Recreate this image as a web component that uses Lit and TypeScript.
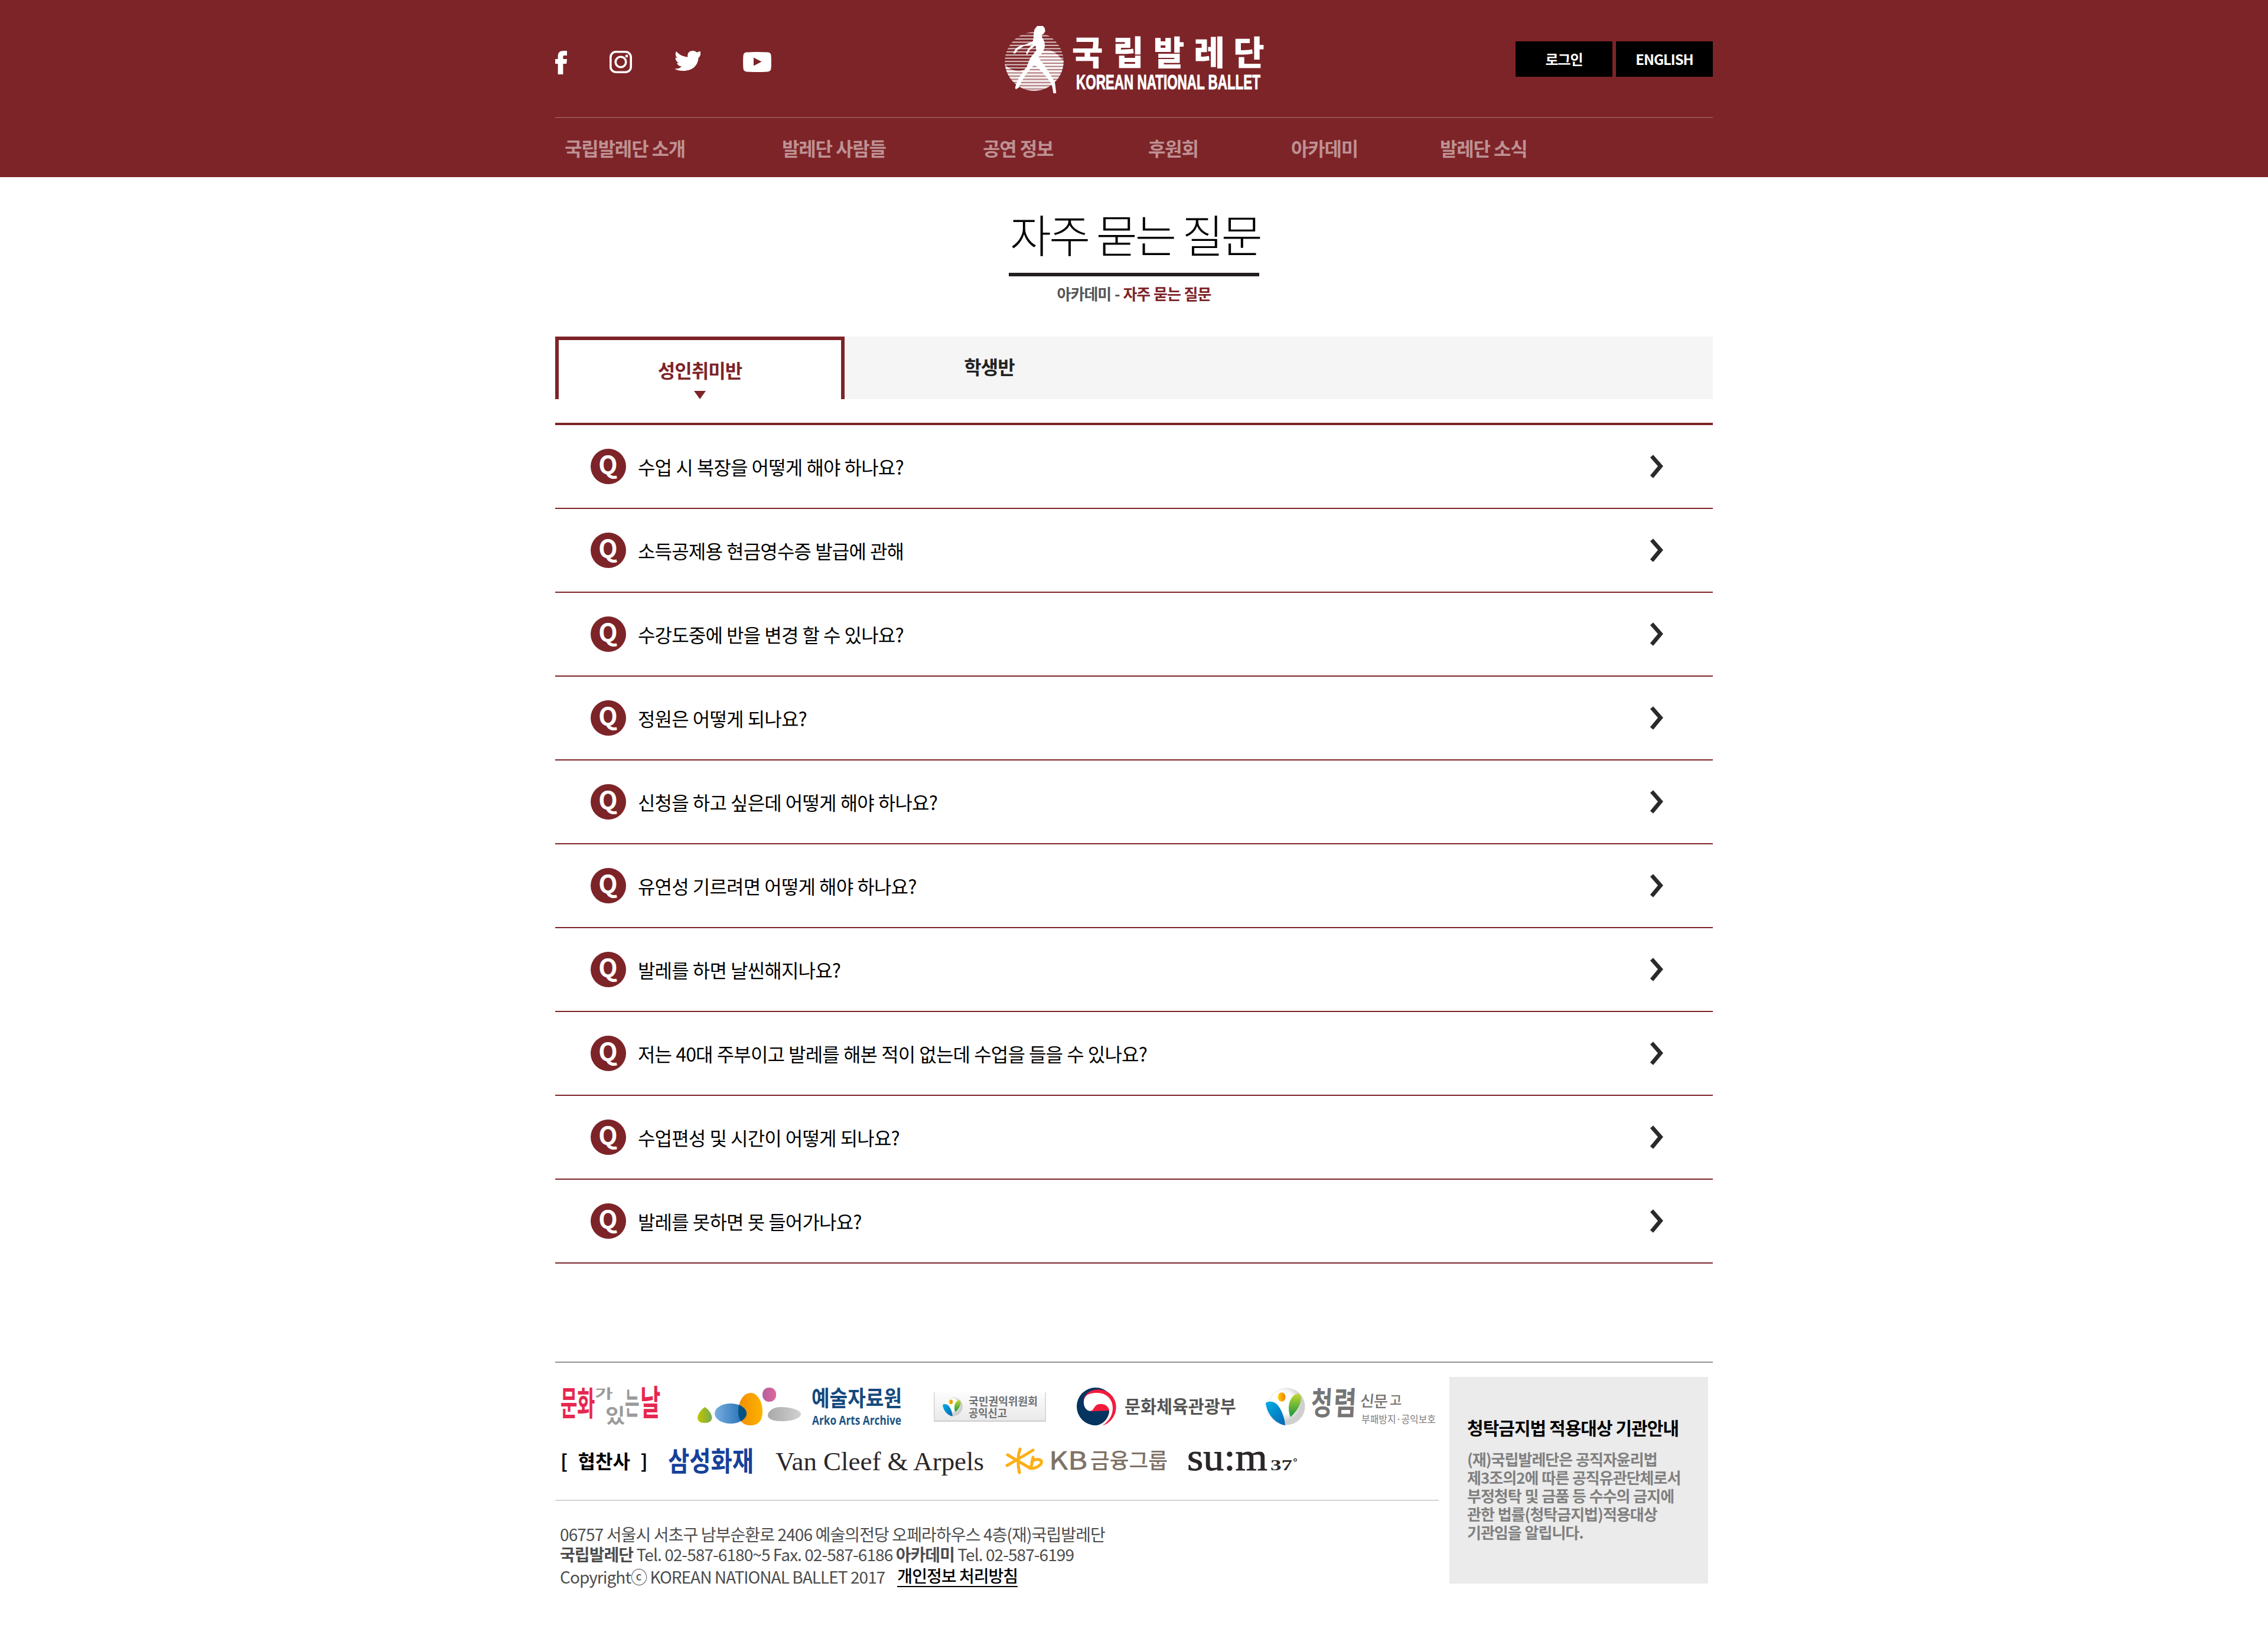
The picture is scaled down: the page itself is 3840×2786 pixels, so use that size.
import { LitElement, html, css, svg } from "lit";
import { customElement, property } from "lit/decorators.js";

const NAV = ["국립발레단 소개", "발레단 사람들", "공연 정보", "후원회", "아카데미", "발레단 소식"];

const QUESTIONS = [
  "수업 시 복장을 어떻게 해야 하나요?",
  "소득공제용 현금영수증 발급에 관해",
  "수강도중에 반을 변경 할 수 있나요?",
  "정원은 어떻게 되나요?",
  "신청을 하고 싶은데 어떻게 해야 하나요?",
  "유연성 기르려면 어떻게 해야 하나요?",
  "발레를 하면 날씬해지나요?",
  "저는 40대 주부이고 발레를 해본 적이 없는데 수업을 들을 수 있나요?",
  "수업편성 및 시간이 어떻게 되나요?",
  "발레를 못하면 못 들어가나요?",
];

const base = css`
  :host { box-sizing: border-box; }
  * { box-sizing: border-box; }
  h1, h3, p { margin: 0; }
  svg { display: block; flex: none; overflow: visible; }
  svg text { font-family: "Noto Sans CJK KR", sans-serif; letter-spacing: 0; word-spacing: 0; }
`;

@customElement("social-links")
class SocialLinks extends LitElement {
  static styles = [base, css`
    :host { display: flex; align-items: flex-start; }
    .fb { margin-right: 72px; }
    .ig { margin-right: 72px; }
    .tw { margin-right: 72px; }
    .yt { margin-top: 2px; }
  `];
  render() {
    return html`
      <svg class="fb" width="20" height="40" viewBox="0 0 20 40" fill="#fff">
        <path d="M4.600 40V22H0v-8h4.600V9.500C4.600 3 8 0 14 0h6v8h-4.500C13.600 8 13.400 9 13.400 10.500V14H20l-.8 8h-5.800v18z"/>
      </svg>
      <svg class="ig" width="38" height="38" viewBox="0 0 38 38" fill="none" stroke="#fff" stroke-width="3.600">
        <rect x="1.800" y="1.800" width="34.400" height="34.400" rx="9"/>
        <circle cx="19" cy="19" r="8.800"/>
        <circle cx="29" cy="9" r="2.400" fill="#fff" stroke="none"/>
      </svg>
      <svg class="tw" width="44" height="34" viewBox="0 0 44 34" fill="#fff">
        <path d="M44 2v5q-1 3-3.500 5C40 25 30 34 15 34 9 34 4 33 0 30.500c4.500.3 9-.8 12-3.800-4-.4-7-2.700-8-6.200h3.700C3.700 19 1.500 15.500 1.500 11.500l3.600 1C1.500 9.500.8 4.800 3 1c5 5.500 11 9 19.500 9.500C21 4 25.500 0 31 0c3 0 5 1 6.800 2.800L43.500.8 44 2z"/>
      </svg>
      <svg class="yt" width="48" height="34" viewBox="0 0 48 34">
        <path d="M6 .6Q24-.6 42 .6 47.400 1 47.600 7q.6 10 0 20-.2 6-5.600 6.400-18 1.200-36 0Q.6 33 .4 27q-.6-10 0-20Q.6 1 6 .6z" fill="#fff"/>
        <path d="M18 9.500L31.500 16.500 18 23.500z" fill="#7d2428"/>
      </svg>`;
  }
}

@customElement("ballet-logo")
class BalletLogo extends LitElement {
  static styles = [base, css`
    :host { display: block; }
    .ko { font-size: 172px; font-weight: 900; }
    svg .en { font-family: "Liberation Sans", Arial, sans-serif; font-size: 104px; font-weight: 700; }
  `];
  render() {
    const thin = Array.from({ length: 13 }, (_, i) => 106 + i * 16.3);
    const thick = Array.from({ length: 13 }, (_, i) => 204 + i * 16.3);
    return html`
      <svg width="437" height="111" viewBox="126 72 1311 333" fill="#fff">
        <defs>
          <clipPath id="disc"><circle cx="273" cy="252" r="149"/></clipPath>
          <clipPath id="low"><path d="M120 262Q150 300 196 302 240 296 262 240 300 192 345 194 385 200 410 240L440 250V420H120z"/></clipPath>
        </defs>
        <g clip-path="url(#disc)" opacity=".66">
          ${thin.map((y) => svg`<rect x="120" y=${y - 4} width="310" height="7"/>`)}
        </g>
        <g clip-path="url(#disc)"><g clip-path="url(#low)">
          <rect x="120" y="190" width="310" height="220" opacity=".35"/>
          ${thick.map((y) => svg`<rect x="120" y=${y - 5} width="310" height="11" opacity=".85"/>`)}
        </g></g>
        <path d="M288 72h30l9 12 2 16-8 12-10 6 2 12c10 14 14 26 14 42 0 20-16 42-32 60 14 20 34 44 48 68 16 26 30 44 36 64l6 50h-15c-2-22-6-40-14-54-22-34-50-66-82-90-26 22-46 52-62 80-8 12-14 24-16 34l-16 10-4-8c4-14 8-28 16-44 14-26 30-42 44-64 6-16 12-34 20-46l28-36-4-26-30 24-14 26-4-12 10-18 22-24-44 8-32 20-12 18-10-2 14-24c16-12 32-18 50-20l36-16 4-20c-2-16 4-32 4-40z"/>
        <text class="ko" y="270"><tspan x="464">국</tspan><tspan x="672">립</tspan><tspan x="878">발</tspan><tspan x="1084">레</tspan><tspan x="1284">단</tspan></text>
        <text class="en" x="486" y="392" textLength="936" lengthAdjust="spacingAndGlyphs" stroke="#fff" stroke-width="3">KOREAN NATIONAL BALLET</text>
      </svg>`;
  }
}

@customElement("site-header")
class SiteHeader extends LitElement {
  static styles = [base, css`
    :host { display: block; background: #7d2428; height: 300px; }
    .wrap { width: 1960px; margin: 0 auto; }
    .top { height: 200px; border-bottom: 2px solid rgba(255, 255, 255, .2); display: grid; grid-template-columns: 762px 1fr auto; align-items: start; }
    social-links { margin-top: 86px; }
    ballet-logo { margin-top: 44px; }
    .btns { display: flex; gap: 6px; margin-top: 70px; }
    .btn { width: 164px; height: 60px; background: #000; color: #fff; font-size: 24px; font-weight: 700; line-height: 60px; text-align: center; letter-spacing: -.045em; }
    .nav { height: 100px; display: grid; grid-template-columns: 368px 340px 280px 242px 252px auto; padding-left: 16px; line-height: 100px; font-size: 32px; font-weight: 700; letter-spacing: -.036em; color: rgba(255, 255, 255, .5); white-space: nowrap; }
  `];
  render() {
    return html`
      <div class="wrap">
        <div class="top">
          <social-links></social-links>
          <ballet-logo></ballet-logo>
          <div class="btns"><div class="btn">로그인</div><div class="btn">ENGLISH</div></div>
        </div>
        <nav class="nav">${NAV.map((n) => html`<span>${n}</span>`)}</nav>
      </div>`;
  }
}

@customElement("faq-row")
class FaqRow extends LitElement {
  @property() question = "";
  static styles = [base, css`
    :host { display: flex; align-items: center; height: 142px; border-bottom: 2px solid #7d2428; padding: 0 84px 0 60px; }
    .q { margin-right: 20px; }
    svg .mark { font-size: 42px; font-weight: 700; fill: #fff; }
    .text { flex: 1; font-size: 32px; letter-spacing: -.0255em; word-spacing: .6px; color: #000; }
  `];
  render() {
    return html`
      <svg class="q" width="60" height="60" viewBox="0 0 60 60">
        <circle cx="30" cy="30" r="30" fill="#7d2428"/>
        <text class="mark" x="29.500" y="43" text-anchor="middle">Q</text>
      </svg>
      <div class="text">${this.question}</div>
      <svg width="22" height="40" viewBox="0 0 22 40">
        <path d="M2.500 2.500L17.500 19.500 2.500 37.500" fill="none" stroke="#2a2a2a" stroke-width="6.800"/>
      </svg>`;
  }
}

@customElement("partner-logos")
class PartnerLogos extends LitElement {
  static styles = [base, css`
    :host { display: block; }
    .row { display: flex; align-items: flex-start; }
    .first { padding: 18px 0 0 10px; height: 120px; }
    .second { padding: 0 0 0 9px; height: 88px; }
    .culture { margin-right: 63px; }
    .arko { margin-right: 54px; }
    .report { margin: 8px 52px 0 0; }
    .mcst { margin-right: 50px; }
    .label { width: 183px; white-space: pre; word-spacing: 1.500px; font-size: 32px; font-weight: 700; line-height: 32px; margin-top: 5px; color: #000; }
    .samsung { margin-right: 38px; }
    .van { margin: 4px 37px 0 0; }
    .kb { margin-right: 35px; }
    .sum { margin-top: 8px; }
    .b { font-weight: 700; }
    .m { font-weight: 500; }
    svg .serif { font-family: "Liberation Serif", serif; }
    svg .open { font-family: "Open Sans", "Noto Sans", sans-serif; font-weight: 700; }
  `];
  render() {
    const leaf = svg`
      <circle cx="35" cy="32" r="31.500" fill="url(#ball)"/>
      <path d="M0 26C6 22 16 23 22 32c6 8 10 20 11 32C20 62 2 48 0 26z" fill="url(#blue)"/>
      <path d="M42 50C38 40 37 26 45 16c5-6 11-8 14-2 3 12-6 26-17 36z" fill="url(#green)"/>
      <ellipse cx="27" cy="16" rx="6.500" ry="7.800" fill="url(#sun)"/>`;
    return html`
      <div class="row first">
        <svg class="culture" width="168" height="64" viewBox="0 0 168 64">
          <g class="b" fill="#e6274f">
            <text font-size="31" transform="translate(-1 47) scale(1 1.850)">문</text>
            <text font-size="36" transform="translate(27 47) scale(.92 1.550)">화</text>
            <text font-size="34" transform="translate(134 47) scale(1.100 1.750)">날</text>
          </g>
          <g class="b" fill="#9b9b9b">
            <text font-size="24" transform="translate(57 18) scale(1.400 .9)">가</text>
            <text font-size="33" transform="translate(75 60) scale(1.100 1.050)">있</text>
            <text font-size="28" transform="translate(108 46) scale(.95 1.850)">는</text>
          </g>
        </svg>
        <svg class="arko" width="346" height="66" viewBox="0 0 346 66">
          <defs>
            <linearGradient id="ag"><stop offset="0" stop-color="#c3c500"/><stop offset="1" stop-color="#78ab4e"/></linearGradient>
            <linearGradient id="ab"><stop offset="0" stop-color="#78aee0"/><stop offset="1" stop-color="#1d69b0"/></linearGradient>
            <linearGradient id="ao"><stop offset="0" stop-color="#f28c00"/><stop offset="1" stop-color="#fdb400"/></linearGradient>
            <linearGradient id="ap"><stop offset="0" stop-color="#b2609c"/><stop offset="1" stop-color="#e2659c"/></linearGradient>
            <linearGradient id="as"><stop offset="0" stop-color="#a9a9a9"/><stop offset="1" stop-color="#d0d0d0"/></linearGradient>
            <clipPath id="oc"><path d="M90 9c12 0 20 16 20 32s-8 23-21 23-20-9-20-24S77 9 90 9z"/></clipPath>
          </defs>
          <path d="M12.500 33C18 36 24.500 45 24.500 51S19 60 12 60 0 57 0 51 7 36 12.500 33z" fill="url(#ag)"/>
          <path d="M90 9c12 0 20 16 20 32s-8 23-21 23-20-9-20-24S77 9 90 9z" fill="url(#ao)"/>
          <ellipse cx="56" cy="44" rx="27" ry="17" fill="url(#ab)"/>
          <ellipse cx="56" cy="44" rx="27" ry="17" fill="#005283" clip-path="url(#oc)"/>
          <rect x="110" y="0" width="23" height="24" rx="11" fill="url(#ap)"/>
          <path d="M141 33c16 0 34 5 34 12s-16 12-32 12-24-4-24-10 8-14 22-14z" fill="url(#as)"/>
          <text class="b" x="193" y="32" font-size="37" fill="#154a7e" textLength="153" lengthAdjust="spacingAndGlyphs">예술자료원</text>
          <text class="open" x="194" y="63" font-size="20.500" fill="#1b5484" textLength="151" lengthAdjust="spacingAndGlyphs">Arko Arts Archive</text>
        </svg>
        <svg class="report" width="190" height="50" viewBox="0 0 190 50">
          <defs>
            <linearGradient id="card" x2="0" y2="1"><stop offset="0" stop-color="#fdfdfd"/><stop offset="1" stop-color="#e9e9e9"/></linearGradient>
            <radialGradient id="ball" cx=".4" cy=".4"><stop offset=".6" stop-color="#fff"/><stop offset="1" stop-color="#cfcfcf"/></radialGradient>
            <linearGradient id="blue" x2="1" y2="1"><stop offset="0" stop-color="#00aee6"/><stop offset="1" stop-color="#0765b3"/></linearGradient>
            <linearGradient id="green" x2="0" y2="1"><stop offset="0" stop-color="#c3d82e"/><stop offset="1" stop-color="#14953f"/></linearGradient>
            <linearGradient id="sun"><stop offset="0" stop-color="#ffd400"/><stop offset="1" stop-color="#f07c00"/></linearGradient>
          </defs>
          <rect width="190" height="50" fill="#d2d2d2"/>
          <rect x="1.500" width="187" height="47.500" fill="url(#card)"/>
          <g transform="translate(15 8) scale(.51)">${leaf}</g>
          <text class="b" x="59" y="21.500" font-size="18.500" fill="#707070" textLength="117" lengthAdjust="spacingAndGlyphs">국민권익위원회</text>
          <text class="b" x="59" y="41.500" font-size="18.500" fill="#707070" textLength="65" lengthAdjust="spacingAndGlyphs">공익신고</text>
        </svg>
        <svg class="mcst" width="270" height="64" viewBox="847 180 810 192">
          <circle cx="943" cy="276" r="96" fill="#04345f"/>
          <path d="M883 240C892 205 925 190 955 190c58 0 92 45 92 90 0 45-32 80-64 92l-14-2z" fill="#f31b3c"/>
          <path d="M883 262c-3-47 32-55 67-55 55 0 82 40 80 80-2 40-22 65-54 87l-30 0c46-12 66-50 66-77-4-35-47-41-66-27-14 12-14 28-31 29-18 0-30-19-32-37z" fill="#fff"/>
          <path d="M1012 297C1010 336 982 368 943 372C910 372 880 350 870 330L930 300z" fill="#04345f"/>
          <text class="b" x="1090" y="309" font-size="88" fill="#555" textLength="566" lengthAdjust="spacingAndGlyphs">문화체육관광부</text>
        </svg>
        <svg class="clean" width="290" height="64" viewBox="0 0 290 64">
          ${leaf}
          <g fill="#757575" class="b">
            <text font-size="40" transform="translate(76 46) scale(.98 1.350) skewX(-4)">청</text>
            <text font-size="40" transform="translate(114 46) scale(1.050 1.350) skewX(-4)">렴</text>
            <text class="m" font-size="26" transform="translate(159 32) skewX(-6)">신</text>
            <text class="m" font-size="26" x="183" y="33">문</text>
            <text class="m" font-size="22" x="210" y="29">고</text>
          </g>
          <text x="162" y="59.500" font-size="17.500" fill="#808080" textLength="126" lengthAdjust="spacingAndGlyphs">부패방지·공익보호</text>
        </svg>
      </div>
      <div class="row second">
        <div class="label">[  협찬사  ]</div>
        <svg class="samsung" width="143" height="44" viewBox="0 0 143 44">
          <text class="b" x="-1" y="39" font-size="46" fill="#15419a" textLength="145" lengthAdjust="spacingAndGlyphs">삼성화재</text>
        </svg>
        <svg class="van" width="353" height="46" viewBox="0 0 353 46">
          <text class="serif" x="0" y="34" font-size="45" fill="#2b2728" textLength="353" lengthAdjust="spacingAndGlyphs">Van Cleef &amp; Arpels</text>
        </svg>
        <svg class="kb" width="273" height="44" viewBox="0 0 273 44">
          <g fill="none" stroke="#fcaf17" stroke-width="5" stroke-linecap="round" stroke-linejoin="round">
            <path d="M24 2Q18 20 23 42M3 12L42 35Q52 35 59 28 63 22 56 20 48 19 44 24M46 16L43 32M46 4Q30 14 2 30"/>
          </g>
          <text x="73" y="36.500" font-size="42" fill="#7f7266" stroke="#7f7266" stroke-width=".6" textLength="65" lengthAdjust="spacingAndGlyphs">KB</text>
          <text class="m" x="143" y="34.500" font-size="36" fill="#7f7266" textLength="131" lengthAdjust="spacingAndGlyphs">금융그룹</text>
        </svg>
        <svg class="sum" width="186" height="30" viewBox="0 0 186 30">
          <text class="serif" x="-1" y="30" font-size="66" fill="#2b2728" stroke="#2b2728" textLength="136" lengthAdjust="spacingAndGlyphs">su:m</text>
          <text class="serif b" x="140" y="30" font-size="25" fill="#2b2728" textLength="37" lengthAdjust="spacingAndGlyphs">37</text>
          <circle cx="182" cy="12.500" r="2.200" fill="none" stroke="#2b2728" stroke-width="1.300"/>
        </svg>
      </div>`;
  }
}

@customElement("site-footer")
class SiteFooter extends LitElement {
  static styles = [base, css`
    :host { display: flex; justify-content: space-between; align-items: flex-start; width: 1960px; margin: 166px auto 0; border-top: 2px solid #929292; padding: 24px 8px 0 0; }
    .left { width: 1496px; }
    .info { border-top: 2px solid #d2d3d3; padding: 39px 0 0 8px; font-size: 28px; line-height: 34px; letter-spacing: -.0315em; color: #4d4d4d; white-space: nowrap; }
    .info b { font-weight: 700; }
    .tel { letter-spacing: -.033em; }
    .copy { display: flex; align-items: flex-start; letter-spacing: -.034em; }
    .copy span { margin-top: 4px; }
    .link { color: #000; font-weight: 500; margin-left: 21px; height: 39px; border-bottom: 2px solid #000; padding-top: 2px; }
    .notice { width: 438px; height: 350px; background: #ebebeb; padding: 68px 0 0 30px; white-space: nowrap; }
    .notice h3 { font-size: 30px; line-height: 34px; font-weight: 700; letter-spacing: -.032em; color: #000; }
    .notice p { margin-top: 21px; font-size: 26px; line-height: 31px; font-weight: 700; letter-spacing: -.038em; word-spacing: .9px; color: #808080; }
  `];
  render() {
    return html`
      <div class="left">
        <partner-logos></partner-logos>
        <div class="info">
          <div>06757 서울시 서초구 남부순환로 2406 예술의전당 오페라하우스 4층(재)국립발레단</div>
          <div class="tel"><b>국립발레단</b> Tel. 02-587-6180~5 Fax. 02-587-6186 <b>아카데미</b> Tel. 02-587-6199</div>
          <div class="copy"><span>Copyrightⓒ KOREAN NATIONAL BALLET 2017</span><div class="link">개인정보 처리방침</div></div>
        </div>
      </div>
      <div class="notice">
        <h3>청탁금지법 적용대상 기관안내</h3>
        <p>(재)국립발레단은 공직자윤리법<br>제3조의2에 따른 공직유관단체로서<br>부정청탁 및 금품 등 수수의 금지에<br>관한 법률(청탁금지법)적용대상<br>기관임을 알립니다.</p>
      </div>`;
  }
}

@customElement("app-root")
class AppRoot extends LitElement {
  static styles = [base, css`
    :host { display: block; width: 3840px; height: 2786px; overflow: hidden; background: #fff; font-family: "Noto Sans CJK KR", "Noto Sans", sans-serif; }
    main { width: 1960px; margin: 0 auto; }
    .title { width: 424px; height: 168px; margin: 0 auto; padding-top: 45px; border-bottom: 6px solid #231f20; font-size: 76px; line-height: 100px; font-weight: 300; letter-spacing: -.048em; text-indent: 2px; color: #000; white-space: nowrap; }
    .crumb { height: 102px; padding-top: 9px; text-align: center; font-size: 26px; line-height: 40px; font-weight: 700; letter-spacing: -.038em; word-spacing: .8px; color: #555; }
    .crumb b { color: #7d2428; font-weight: 700; }
    .tabs { display: flex; height: 106px; background: #f5f5f5; margin-bottom: 40px; }
    .tab { width: 490px; text-align: center; font-size: 32px; line-height: 100px; font-weight: 700; letter-spacing: -.03em; color: #222; }
    .on { background: #fff; color: #7d2428; border: 6px solid #7d2428; border-bottom: 0; display: flex; flex-direction: column; align-items: center; justify-content: space-between; }
    .on span { height: 86px; }
    .list { border-top: 4px solid #7d2428; }
  `];
  render() {
    return html`
      <site-header></site-header>
      <main>
        <h1 class="title">자주 묻는 질문</h1>
        <div class="crumb">아카데미 - <b>자주 묻는 질문</b></div>
        <div class="tabs">
          <div class="tab on"><span>성인취미반</span>
            <svg width="20" height="14" viewBox="0 0 20 14"><path d="M0 0h20L10 14z" fill="#7d2428"/></svg>
          </div>
          <div class="tab">학생반</div>
        </div>
        <div class="list">${QUESTIONS.map((q) => html`<faq-row .question=${q}></faq-row>`)}</div>
      </main>
      <site-footer></site-footer>`;
  }
}
